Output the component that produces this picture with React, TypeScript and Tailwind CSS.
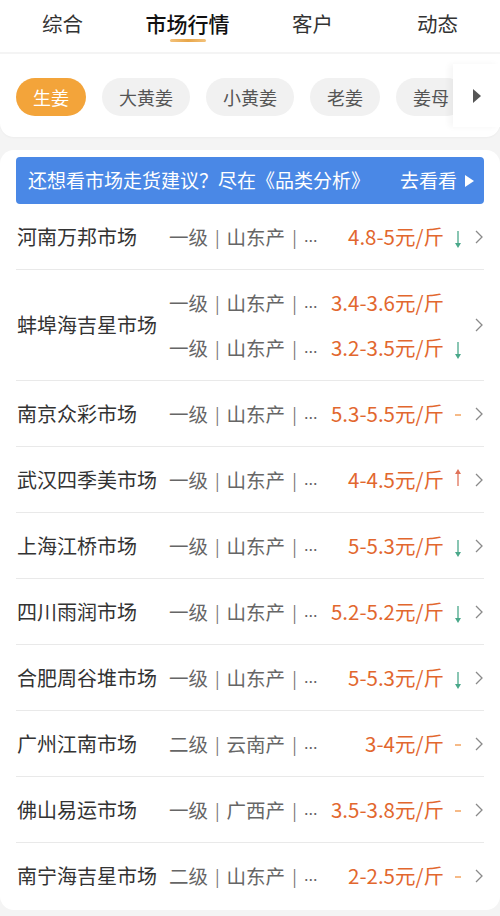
import React from "react";

type Quote = { grade: string; price: string; trend?: "up" | "down" | "flat" };
type Market = { name: string; quotes: Quote[] };

const tabs = ["综合", "市场行情", "客户", "动态"];
const chips = ["生姜", "大黄姜", "小黄姜", "老姜", "姜母"];

const markets: Market[] = [
  { name: "河南万邦市场", quotes: [{ grade: "一级 | 山东产 | ...", price: "4.8-5元/斤", trend: "down" }] },
  {
    name: "蚌埠海吉星市场",
    quotes: [
      { grade: "一级 | 山东产 | ...", price: "3.4-3.6元/斤" },
      { grade: "一级 | 山东产 | ...", price: "3.2-3.5元/斤", trend: "down" },
    ],
  },
  { name: "南京众彩市场", quotes: [{ grade: "一级 | 山东产 | ...", price: "5.3-5.5元/斤", trend: "flat" }] },
  { name: "武汉四季美市场", quotes: [{ grade: "一级 | 山东产 | ...", price: "4-4.5元/斤", trend: "up" }] },
  { name: "上海江桥市场", quotes: [{ grade: "一级 | 山东产 | ...", price: "5-5.3元/斤", trend: "down" }] },
  { name: "四川雨润市场", quotes: [{ grade: "一级 | 山东产 | ...", price: "5.2-5.2元/斤", trend: "down" }] },
  { name: "合肥周谷堆市场", quotes: [{ grade: "一级 | 山东产 | ...", price: "5-5.3元/斤", trend: "down" }] },
  { name: "广州江南市场", quotes: [{ grade: "二级 | 云南产 | ...", price: "3-4元/斤", trend: "flat" }] },
  { name: "佛山易运市场", quotes: [{ grade: "一级 | 广西产 | ...", price: "3.5-3.8元/斤", trend: "flat" }] },
  { name: "南宁海吉星市场", quotes: [{ grade: "二级 | 山东产 | ...", price: "2-2.5元/斤", trend: "flat" }] },
];

const TrendIcon = ({ trend }: { trend?: Quote["trend"] }) => {
  if (trend === "down")
    return (
      <svg width="10" height="20" viewBox="0 0 10 20" className="mt-1">
        <line x1="5" y1="2" x2="5" y2="15" stroke="#4aa88a" strokeWidth="1.3" />
        <path d="M2 14 L8 14 L5 19 Z" fill="#4aa88a" />
      </svg>
    );
  if (trend === "up")
    return (
      <svg width="10" height="20" viewBox="0 0 10 20" className="-mt-1">
        <path d="M2 6 L8 6 L5 1 Z" fill="#e0735a" />
        <line x1="5" y1="5" x2="5" y2="18" stroke="#e0735a" strokeWidth="1.3" />
      </svg>
    );
  if (trend === "flat")
    return (
      <svg width="10" height="20" viewBox="0 0 10 20">
        <line x1="2" y1="11" x2="8" y2="11" stroke="#f5b37a" strokeWidth="1.8" />
      </svg>
    );
  return <span className="w-[10px]" />;
};

const Chevron = () => (
  <svg width="10" height="16" viewBox="0 0 10 16">
    <path d="M2 2 L8 8 L2 14" fill="none" stroke="#8a8a8a" strokeWidth="1.3" />
  </svg>
);

// "一级 | 山东产 | ..." with the separators spaced like the app does
const Grade = ({ text }: { text: string }) => {
  const parts = text.split(" | ");
  return (
    <span className="w-[156px] shrink-0 flex items-center text-[19.5px] text-[#666] whitespace-nowrap">
      {parts.map((p, i) => (
        <React.Fragment key={i}>
          {i > 0 && <span className="mx-[7px] text-[17px] text-[#777]">|</span>}
          {p === "..." ? (
            <span className="font-['Liberation_Sans'] text-[18px] tracking-[-0.5px]">...</span>
          ) : (
            <span>{p}</span>
          )}
        </React.Fragment>
      ))}
    </span>
  );
};

export default function App() {
  return (
    <div
      className="w-[500px] h-[916px] overflow-hidden bg-[#f4f4f4]"
      style={{ fontFamily: '"Noto Sans CJK SC", "Noto Sans", sans-serif' }}
    >
      {/* top tabs */}
      <div className="grid grid-cols-4 h-[52px] bg-white">
        {tabs.map((t, i) => (
          <div key={t} className="flex flex-col items-center pt-[8px]">
            <span
              className={
                i === 1
                  ? "text-[21px] leading-[30px] font-medium text-[#111]"
                  : "text-[20.5px] leading-[30px] text-[#333]"
              }
            >
              {t}
            </span>
            {i === 1 && (
              <span className="mt-[1px] h-[3px] w-[36px] rounded-full bg-gradient-to-r from-[#f3c27a] via-[#e8a648] to-[#f3c27a]" />
            )}
          </div>
        ))}
      </div>

      {/* chips */}
      <div className="mt-[2px] bg-white rounded-b-[14px] h-[83px] relative shadow-[0_1px_2px_rgba(0,0,0,0.03)]">
        <div className="flex items-center gap-[16px] pl-[16px] pt-[24px]">
          {chips.map((c, i) => (
            <span
              key={c}
              className={
                i === 0
                  ? "shrink-0 h-[38px] px-[17px] rounded-full bg-[#f3a43a] text-white text-[18px] leading-[38px]"
                  : "shrink-0 h-[38px] px-[17px] rounded-full bg-[#f1f1f1] text-[#555] text-[18px] leading-[38px]"
              }
            >
              {c}
            </span>
          ))}
        </div>
        <div className="absolute right-0 top-[10px] bottom-[10px] w-[47px] bg-white flex items-center justify-center shadow-[-4px_0_6px_rgba(0,0,0,0.04)]">
          <svg width="10" height="16" viewBox="0 0 10 16">
            <path d="M1 1 L9 8 L1 15 Z" fill="#555" />
          </svg>
        </div>
      </div>

      {/* list card */}
      <div className="mt-[13px] bg-white rounded-[14px] h-[760px] px-[16px] pt-[7px]">
        <div className="flex items-center justify-between h-[47px] rounded-[4px] bg-[#4a88e6] pl-[12px] pr-[10px] text-white text-[19px]">
          <span>还想看市场走货建议？尽在《品类分析》</span>
          <span className="flex items-center gap-[8px]">
            去看看
            <svg width="9" height="12" viewBox="0 0 9 12">
              <path d="M0 0 L9 6 L0 12 Z" fill="#fff" />
            </svg>
          </span>
        </div>

        {markets.map((m, idx) => (
          <div
            key={m.name}
            className={
              idx === markets.length - 1
                ? "flex items-center py-[10px]"
                : "flex items-center py-[10px] border-b border-[#e9e9e9]"
            }
          >
            <span className="w-[153px] shrink-0 pl-[1px] text-[20px] text-[#333]">{m.name}</span>
            <div className="flex-1 flex flex-col">
              {m.quotes.map((q, j) => (
                <div key={j} className="flex items-center h-[45px]">
                  <Grade text={q.grade} />
                  <span className="flex-1 text-right text-[20.5px] text-[#e2672e] whitespace-nowrap">{q.price}</span>
                  <span className="w-[28px] flex justify-center shrink-0">
                    <TrendIcon trend={q.trend} />
                  </span>
                </div>
              ))}
            </div>
            <span className="w-[12px] flex justify-end shrink-0">
              <Chevron />
            </span>
          </div>
        ))}
      </div>
    </div>
  );
}
